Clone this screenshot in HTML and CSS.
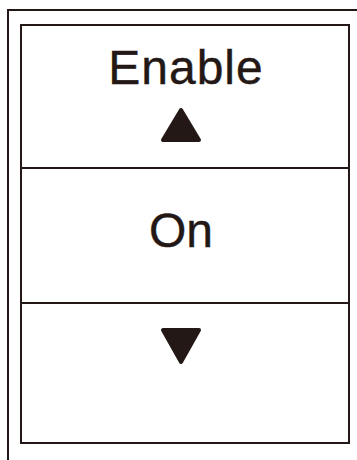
FILE: index.html
```html
<!DOCTYPE html>
<html lang="en">
<head>
    <meta charset="UTF-8">
    <meta name="viewport" content="width=device-width, initial-scale=1.0">
    <title>Enable Setting</title>
    <link rel="stylesheet" href="styles.css">
</head>
<body>
    <div class="frame">
        <div class="panel">
            <div class="row row-top">
                <span class="label label-wide">Enable</span>
                <svg class="arrow arrow-up" width="42" height="36" viewBox="0 0 42 36">
                    <polygon points="21,3 3,33 39,33"/>
                </svg>
            </div>
            <div class="row row-mid">
                <span class="label">On</span>
            </div>
            <div class="row row-bottom">
                <svg class="arrow" width="42" height="38" viewBox="0 0 42 38">
                    <polygon points="3,3 39,3 21,35"/>
                </svg>
            </div>
        </div>
    </div>
</body>
</html>
```

FILE: styles.css
```css
body {
    margin: 0;
    background-color: #fff;
    color: #231815;
    font-family: "Liberation Sans", Arial, sans-serif;
    overflow: hidden;
}
.frame {
    margin: 9px 0 0 7px;
    height: 460px;
    border-top: 2px solid #231815;
    border-left: 2px solid #231815;
    padding: 13px 0 0 11px;
    box-sizing: border-box;
}
.panel {
    width: 330px;
    height: 420px;
    border: 2px solid #231815;
    box-sizing: border-box;
    display: flex;
    flex-direction: column;
}
.row {
    display: flex;
    flex-direction: column;
    align-items: center;
    padding-right: 8px;
    box-sizing: border-box;
}
.row-top {
    height: 141px;
    padding-top: 18px;
}
.row-mid {
    height: 137px;
    padding-top: 38px;
    border-top: 2px solid #231815;
    border-bottom: 2px solid #231815;
}
.row-bottom {
    flex: 1;
    padding-top: 23px;
}
.label {
    font-size: 48px;
    line-height: 48px;
    -webkit-text-stroke: 0.4px #231815;
}
.label-wide {
    letter-spacing: 1px;
    margin-left: 10px;
}
.arrow {
    display: block;
}
.arrow polygon {
    fill: #231815;
    stroke: #231815;
    stroke-width: 4;
    stroke-linejoin: round;
}
.arrow-up {
    margin-top: 15px;
}
```
